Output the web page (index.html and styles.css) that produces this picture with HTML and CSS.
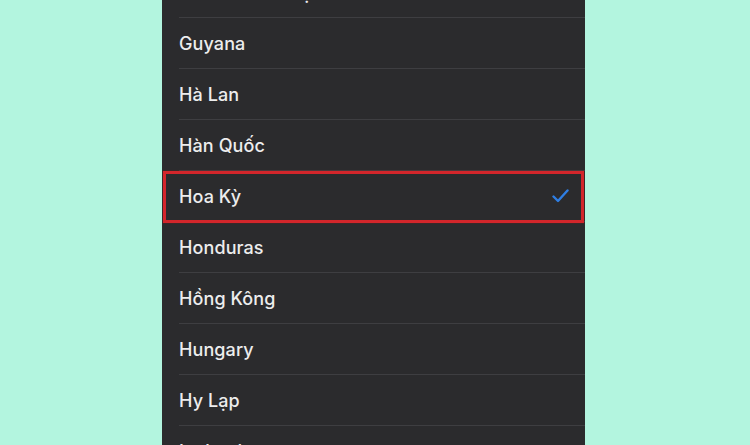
FILE: index.html
```html
<!DOCTYPE html>
<html lang="vi">
<head>
<meta charset="utf-8">
<title>Vùng</title>
<link rel="stylesheet" href="styles.css">
</head>
<body>
<div class="panel">
  <ul class="list">
    <li class="row"><span>Guinea Xích Đạo</span></li>
    <li class="row"><span>Guyana</span></li>
    <li class="row"><span>Hà Lan</span></li>
    <li class="row"><span>Hàn Quốc</span></li>
    <li class="row selected"><span>Hoa Kỳ</span>
      <svg class="check" width="17" height="14" viewBox="0 0 17 14"><path d="M1.5 7.5 L6 12 L15.5 1.5" fill="none" stroke="#2f7ee3" stroke-width="2.4" stroke-linecap="round" stroke-linejoin="round"/></svg>
    </li>
    <li class="row"><span>Honduras</span></li>
    <li class="row"><span>Hồng Kông</span></li>
    <li class="row"><span>Hungary</span></li>
    <li class="row"><span>Hy Lạp</span></li>
    <li class="row"><span>Iceland</span></li>
  </ul>
</div>
</body>
</html>
```
FILE: styles.css
```css
html, body {
  margin: 0;
  padding: 0;
  height: 100%;
  overflow: hidden;
}
body {
  background: #b3f5df;
  font-family: Inter, "Open Sans", "Liberation Sans", sans-serif;
}
.panel {
  margin-left: 162px;
  width: 423px;
  height: 445px;
  background: #2b2b2d;
  overflow: hidden;
}
.list {
  list-style: none;
  margin: -33px 0 0 0;
  padding: 0;
}
.row {
  position: relative;
  margin-left: 17px;
  height: 50px;
  border-bottom: 1px solid #3e3e41;
  display: flex;
  align-items: center;
  justify-content: space-between;
  padding-right: 16px;
  color: #ededed;
  font-size: 18px;
  font-weight: 500;
  letter-spacing: 0.1px;
}
.selected::after {
  content: "";
  position: absolute;
  top: 0;
  bottom: -2px;
  left: -16px;
  right: 1px;
  border: 3px solid #d3262b;
  box-shadow: 0 0 1px rgba(160, 20, 20, 0.8);
}
.check {
  display: block;
  margin-top: -1px;
}
```
